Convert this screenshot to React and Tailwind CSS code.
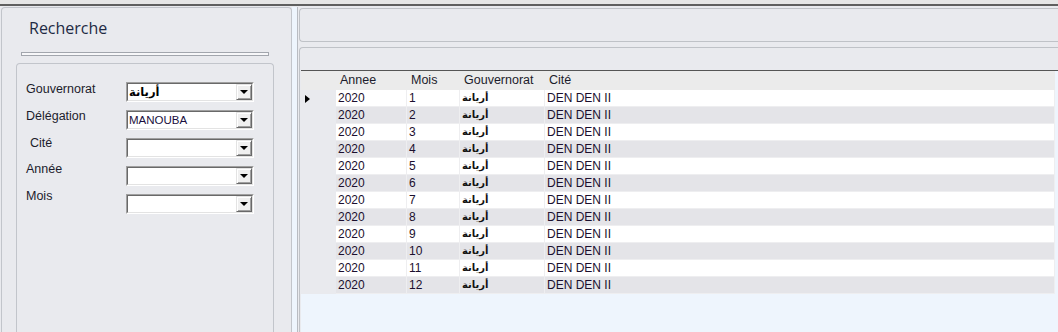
import React from 'react';

const FILTERS = [
  { label: 'Gouvernorat', value: 'أريانة', arabic: true },
  { label: 'Délégation', value: 'MANOUBA' },
  { label: 'Cité', value: '', indent: true },
  { label: 'Année', value: '' },
  { label: 'Mois', value: '' },
];

const ROWS = Array.from({ length: 12 }, (_, i) => ({
  annee: '2020',
  mois: String(i + 1),
  gouv: 'أريانة',
  cite: 'DEN DEN II',
}));

const Combo = ({ value, arabic }) => (
  <div className="h-[20px] w-[128px] border border-t-[#a0a0a0] border-l-[#a0a0a0] border-b-white border-r-white">
    <div className="h-full flex border border-t-[#696969] border-l-[#696969] border-b-[#e3e3e3] border-r-[#e3e3e3] bg-white">
      <span
        className={`flex-1 pl-[1px] leading-[16px] text-[#1a0f40] ${
          arabic ? "text-[11.5px] font-bold font-['DejaVu_Sans',sans-serif] text-black" : 'text-[11.5px]'
        }`}
      >
        {value}
      </span>
      <div className="w-[16px] h-full flex items-center justify-center bg-[#f0f0f0] border border-t-[#e3e3e3] border-l-[#e3e3e3] border-b-[#696969] border-r-[#696969] shadow-[inset_1px_1px_0_#ffffff,inset_-1px_-1px_0_#a0a0a0]">
        <div className="w-0 h-0 border-x-[4px] border-x-transparent border-t-[4px] border-t-black"></div>
      </div>
    </div>
  </div>
);

const HeadCell = ({ w, children }) => (
  <div className={`${w} shrink-0 pl-[4px] leading-[19px] text-[12.5px] text-[#1c1c2c]`}>{children}</div>
);

const Cell = ({ w, bg, children, arabic }) => (
  <div
    className={`${w} ${bg} shrink-0 h-full pl-[2px] border-r border-b border-[#eeeef0] leading-[16px] ${
      arabic ? "text-[10px] font-bold font-['DejaVu_Sans',sans-serif] text-[#111111]" : 'text-[12px] text-[#1b0f2e]'
    }`}
  >
    {children}
  </div>
);

const App = () => {
  return (
    <div className="w-[1058px] h-[332px] overflow-hidden flex flex-col bg-[#e9eaee] font-['Liberation_Sans','DejaVu_Sans',sans-serif]">
      <div className="h-[4px] shrink-0 bg-[#e6e6e6]"></div>
      <div className="h-[2px] shrink-0 bg-[#5f5f5f]"></div>

      <div className="flex flex-1 min-h-0 pt-[1px]">
        {/* left search panel */}
        <div className="w-[292px] shrink-0 pl-[1px] flex">
          <div className="flex-1 flex flex-col border border-b-0 border-[#c2c5cb] rounded-t-[4px] bg-[#e9eaee]">
            <div className="pt-[9px] pl-[27px] text-[16px] leading-[22px] text-[#1f2a44] font-['Open_Sans',sans-serif]">
              Recherche
            </div>
            <div className="mt-[13px] ml-[19px] w-[248px] h-[4px] border border-[#a2a6ad] bg-[#f7f7f9]"></div>

            <div className="mt-[7px] ml-[14px] w-[258px] flex-1 flex border border-b-0 border-[#c2c5cb] rounded-t-[4px] pt-[18px] pl-[9px]">
              <div className="w-[100px] shrink-0">
                {FILTERS.map((f) => (
                  <div key={f.label} className={`h-[26.75px] leading-[15px] text-[12.5px] text-[#1c1c2c] ${f.indent ? 'pl-[4px]' : ''}`}>
                    {f.label}
                  </div>
                ))}
              </div>
              <div className="flex flex-col gap-[8px]">
                {FILTERS.map((f) => (
                  <Combo key={f.label} value={f.value} arabic={f.arabic} />
                ))}
              </div>
            </div>
          </div>
        </div>

        <div className="w-[5px] shrink-0 bg-[#eef5fd]"></div>

        {/* right results panel */}
        <div className="flex-1 min-w-0 flex flex-col border-l border-[#b9bcc2] pl-[1px]">
          <div className="mt-[1px] h-[34px] shrink-0 border border-r-0 border-[#bfc2c7] rounded-l-[4px]"></div>

          <div className="mt-[5px] flex-1 min-h-0 flex flex-col border-t border-l border-[#bfc2c7] rounded-tl-[4px]">
            <div className="h-[22px] shrink-0"></div>
            <div className="flex-1 min-h-0 flex flex-col pl-[1px]">
              <div className="h-[1px] shrink-0 bg-[#555555]"></div>
              <div className="flex-1 min-h-0 flex bg-[#eef5fd]">
                <div className="w-[754px] shrink-0 flex flex-col">
                  <div className="h-[19px] flex bg-[#ebebeb]">
                    <div className="w-[35px] shrink-0"></div>
                    <HeadCell w="w-[71px]">Annee</HeadCell>
                    <HeadCell w="w-[53px]">Mois</HeadCell>
                    <HeadCell w="w-[85px]">Gouvernorat</HeadCell>
                    <HeadCell w="flex-1">Cité</HeadCell>
                  </div>
                  {ROWS.map((r, i) => {
                    const bg = i % 2 === 0 ? 'bg-white' : 'bg-[#e4e4e8]';
                    return (
                      <div key={r.mois} className="h-[17px] flex">
                        <div className="w-[35px] shrink-0 h-full flex items-center pl-[4px] bg-[#e9eaee]">
                          {i === 0 && (
                            <div className="w-0 h-0 border-y-[4px] border-y-transparent border-l-[5px] border-l-black"></div>
                          )}
                        </div>
                        <Cell w="w-[71px]" bg={bg}>{r.annee}</Cell>
                        <Cell w="w-[53px]" bg={bg}>{r.mois}</Cell>
                        <Cell w="w-[85px]" bg={bg} arabic>{r.gouv}</Cell>
                        <Cell w="flex-1" bg={bg}>{r.cite}</Cell>
                      </div>
                    );
                  })}
                </div>
                <div className="flex-1"></div>
              </div>
            </div>
          </div>
        </div>
      </div>
    </div>
  );
};

export default App;
